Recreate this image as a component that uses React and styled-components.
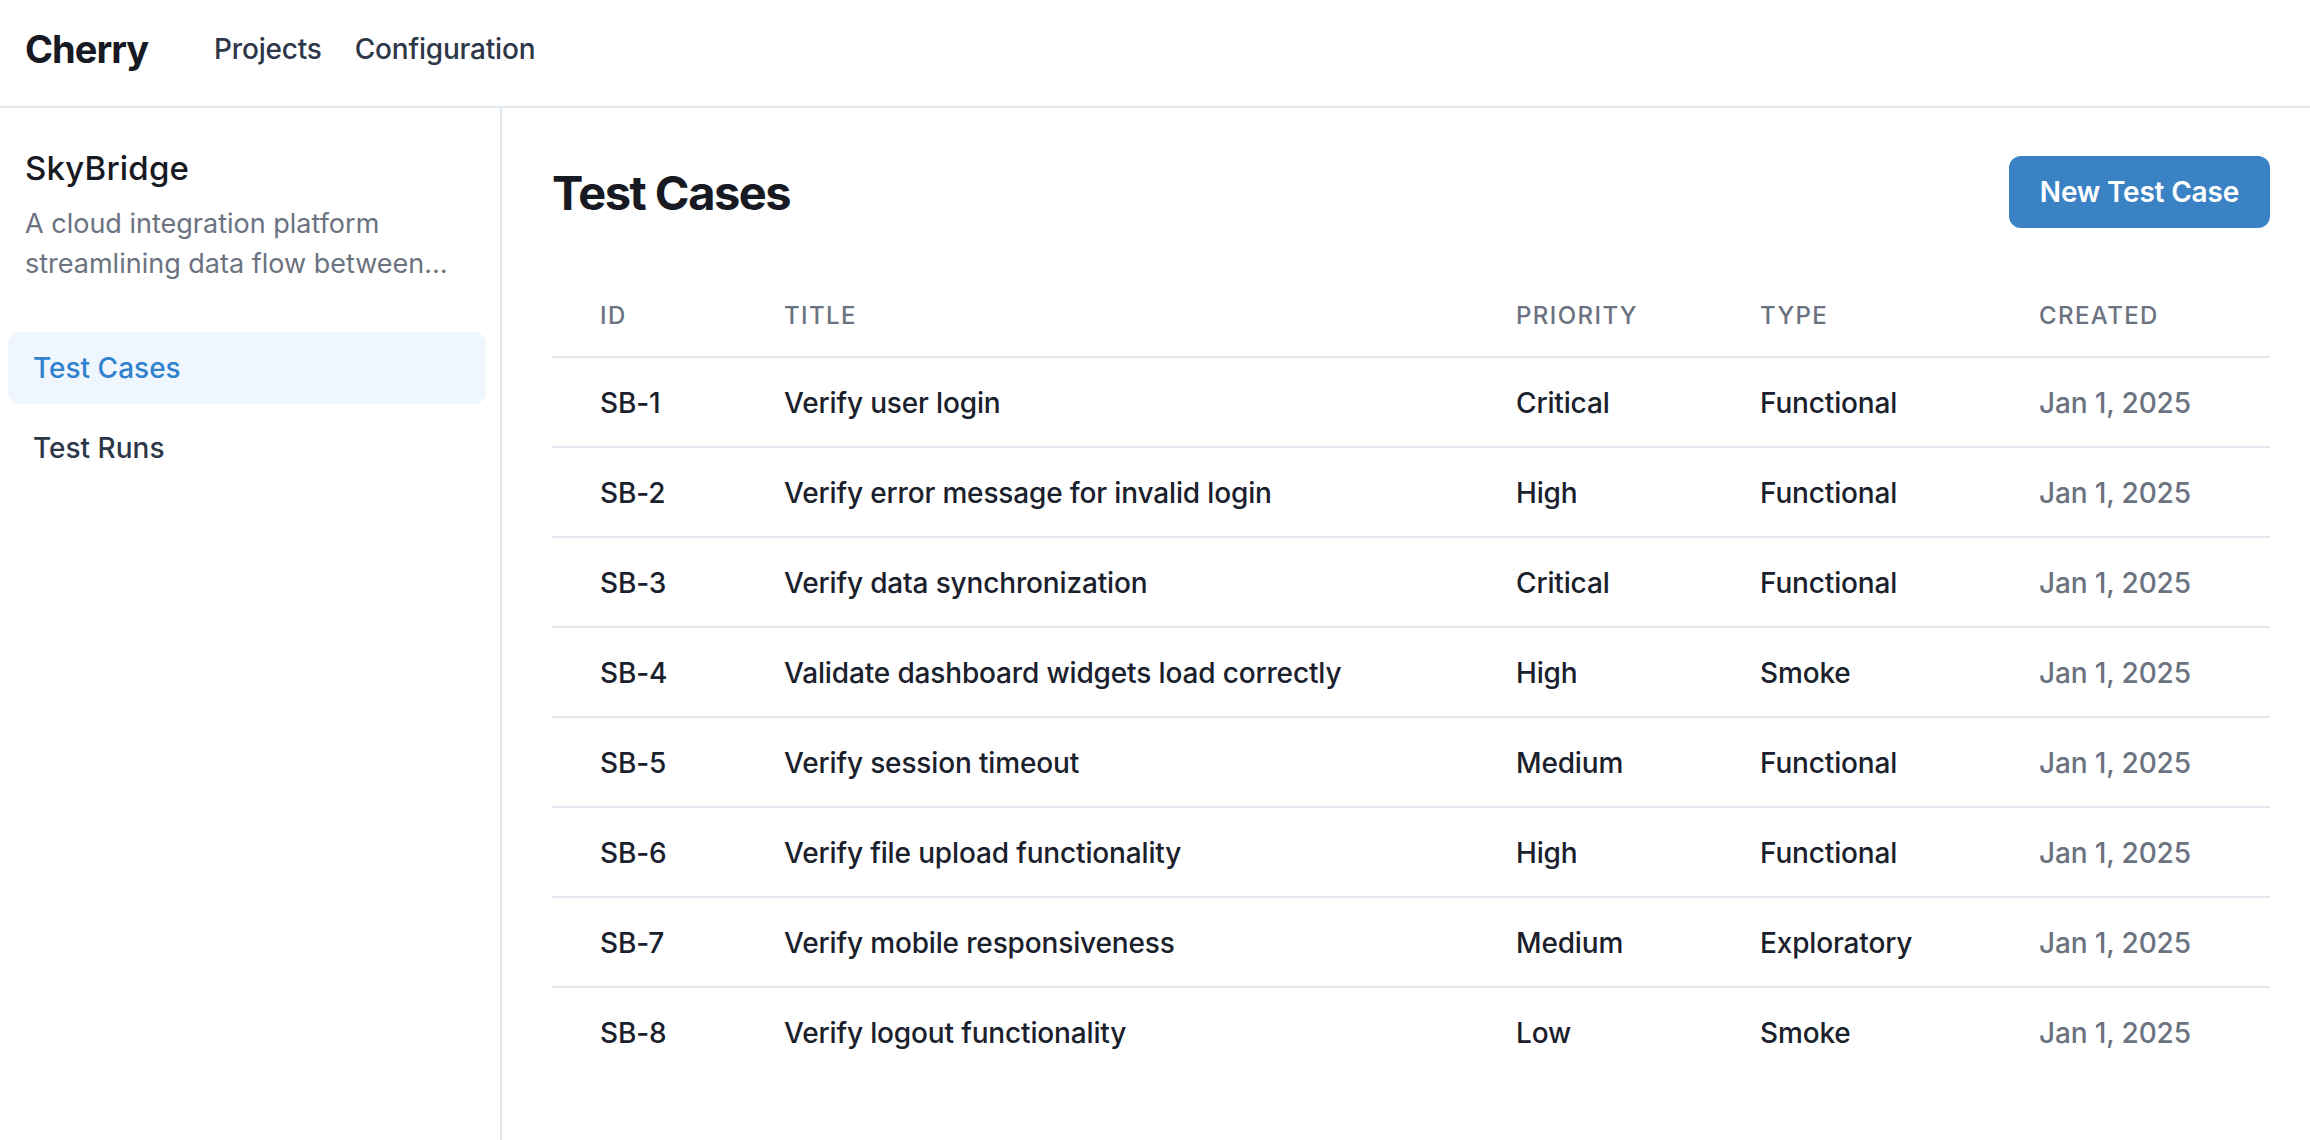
import React from "react";
import styled, { createGlobalStyle } from "styled-components";

const GlobalStyle = createGlobalStyle`
  * { box-sizing: border-box; }
  body {
    margin: 0;
    font-family: Inter, "Noto Sans", "Liberation Sans", sans-serif;
    color: #1a202c;
    background: #fff;
  }
`;

const testCases = [
  { id: "SB-1", title: "Verify user login", priority: "Critical", type: "Functional" },
  { id: "SB-2", title: "Verify error message for invalid login", priority: "High", type: "Functional" },
  { id: "SB-3", title: "Verify data synchronization", priority: "Critical", type: "Functional" },
  { id: "SB-4", title: "Validate dashboard widgets load correctly", priority: "High", type: "Smoke" },
  { id: "SB-5", title: "Verify session timeout", priority: "Medium", type: "Functional" },
  { id: "SB-6", title: "Verify file upload functionality", priority: "High", type: "Functional" },
  { id: "SB-7", title: "Verify mobile responsiveness", priority: "Medium", type: "Exploratory" },
  { id: "SB-8", title: "Verify logout functionality", priority: "Low", type: "Smoke" },
];

const columns = [
  { label: "ID", width: 184 },
  { label: "Title", width: 732 },
  { label: "Priority", width: 244 },
  { label: "Type", width: 279 },
  { label: "Created", width: 279 },
];

export default function App() {
  return (
    <>
      <GlobalStyle />
      <Page>
        <TopBar>
          <Brand>Cherry</Brand>
          <TopNav>
            <TopLink>Projects</TopLink>
            <TopLink>Configuration</TopLink>
          </TopNav>
        </TopBar>
        <Body>
          <Sidebar>
            <ProjectName>SkyBridge</ProjectName>
            <ProjectDesc title="A cloud integration platform streamlining data flow between apps">
              A cloud integration platform streamlining data flow between apps
            </ProjectDesc>
            <SideNav>
              <SideItem $active>Test Cases</SideItem>
              <SideItem>Test Runs</SideItem>
            </SideNav>
          </Sidebar>
          <Main>
            <TitleRow>
              <PageTitle>Test Cases</PageTitle>
              <PrimaryButton>New Test Case</PrimaryButton>
            </TitleRow>
            <Table>
              <colgroup>
                {columns.map((c) => (
                  <col key={c.label} style={{ width: c.width }} />
                ))}
              </colgroup>
              <thead>
                <tr>
                  {columns.map((c) => (
                    <Th key={c.label}>{c.label}</Th>
                  ))}
                </tr>
              </thead>
              <tbody>
                {testCases.map((tc) => (
                  <Tr key={tc.id}>
                    <Td>{tc.id}</Td>
                    <Td>{tc.title}</Td>
                    <Td>{tc.priority}</Td>
                    <Td>{tc.type}</Td>
                    <Td $muted>Jan 1, 2025</Td>
                  </Tr>
                ))}
              </tbody>
            </Table>
          </Main>
        </Body>
      </Page>
    </>
  );
}

const Page = styled.div`
  min-height: 100vh;
  display: flex;
  flex-direction: column;
`;

const TopBar = styled.header`
  height: 108px;
  display: flex;
  align-items: center;
  padding: 0 25px 8px;
  border-bottom: 2px solid #e2e8f0;
`;

const Brand = styled.div`
  font-size: 38px;
  font-weight: 700;
  letter-spacing: -1px;
  color: #171923;
`;

const TopNav = styled.nav`
  display: flex;
  gap: 33px;
  margin-left: 66px;
`;

const TopLink = styled.a`
  font-size: 28px;
  font-weight: 500;
  letter-spacing: -0.2px;
  color: #2d3748;
  cursor: pointer;
`;

const Body = styled.div`
  flex: 1;
  display: flex;
`;

const Sidebar = styled.aside`
  width: 502px;
  flex-shrink: 0;
  border-right: 2px solid #e2e8f0;
  padding: 40px 0 0;
`;

const ProjectName = styled.h2`
  margin: 0;
  padding: 0 25px;
  font-size: 33px;
  line-height: 40px;
  font-weight: 500;
  letter-spacing: 0.2px;
  color: #171923;
`;

const ProjectDesc = styled.p`
  margin: 16px 0 0;
  padding: 0 25px;
  font-size: 27px;
  line-height: 40px;
  max-height: 80px;
  color: #6b7280;
  display: -webkit-box;
  -webkit-line-clamp: 2;
  -webkit-box-orient: vertical;
  overflow: hidden;
`;

const SideNav = styled.nav`
  display: flex;
  flex-direction: column;
  gap: 8px;
  margin-top: 48px;
  padding: 0 14px 0 8px;
`;

const SideItem = styled.a`
  height: 72px;
  display: flex;
  align-items: center;
  padding: 0 25px;
  border-radius: 12px;
  font-size: 28px;
  font-weight: 500;
  cursor: pointer;
  color: ${(p) => (p.$active ? "#3182ce" : "#2d3748")};
  background: ${(p) => (p.$active ? "#eff6fe" : "transparent")};
`;

const Main = styled.main`
  flex: 1;
  padding: 48px 40px 40px 50px;
`;

const TitleRow = styled.div`
  display: flex;
  align-items: center;
  justify-content: space-between;
  height: 72px;
`;

const PageTitle = styled.h1`
  margin: 0;
  font-size: 47px;
  font-weight: 700;
  letter-spacing: -1.5px;
  color: #171923;
`;

const PrimaryButton = styled.button`
  height: 72px;
  padding: 0 31px;
  border: none;
  border-radius: 12px;
  background: #3a82c4;
  color: #fff;
  font-family: inherit;
  font-size: 28px;
  font-weight: 600;
  letter-spacing: -0.2px;
  cursor: pointer;
`;

const Table = styled.table`
  width: 100%;
  margin-top: 48px;
  border-collapse: collapse;
  table-layout: fixed;
`;

const Th = styled.th`
  text-align: left;
  padding: 24px 48px;
  font-size: 24px;
  line-height: 32px;
  font-weight: 500;
  letter-spacing: 1.4px;
  text-transform: uppercase;
  color: #6b7280;
  border-bottom: 2px solid #e2e8f0;
`;

const Tr = styled.tr`
  & + & td {
    border-top: 2px solid #e2e8f0;
  }
`;

const Td = styled.td`
  padding: 25px 48px 23px;
  font-size: 28px;
  line-height: 40px;
  font-weight: 500;
  letter-spacing: -0.15px;
  white-space: nowrap;
  color: ${(p) => (p.$muted ? "#6b7280" : "#1a202c")};
`;
